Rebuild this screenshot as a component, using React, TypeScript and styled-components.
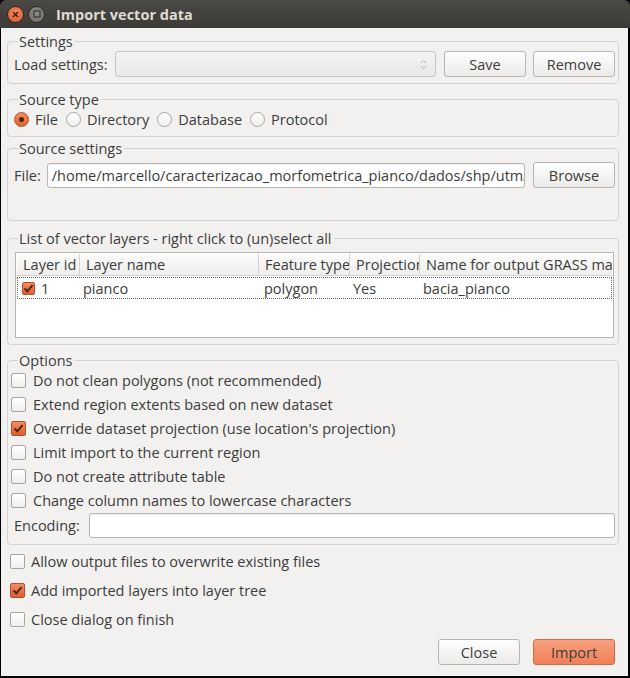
import React from "react";
import styled, { createGlobalStyle, css } from "styled-components";

const Global = createGlobalStyle`
  html, body { margin: 0; padding: 0; background: #000; }
  body { width: 630px; height: 678px; overflow: hidden; }
  * { box-sizing: border-box; }
`;

const FONT = `"Open Sans", "Noto Sans", sans-serif`;

const Window = styled.div`
  width: 630px;
  height: 678px;
  display: flex;
  flex-direction: column;
  background: #000;
  font-family: ${FONT};
  font-size: 14.5px;
  color: #3c3c3c;
`;

const TitleBar = styled.div`
  height: 28px;
  flex: none;
  display: flex;
  align-items: center;
  padding-left: 7px;
  gap: 4px;
  background: linear-gradient(#4a4944, #3c3b37);
  border-radius: 6px 6px 0 0;
`;

const WinBtn = styled.div<{ $close?: boolean }>`
  width: 17px;
  height: 17px;
  border-radius: 50%;
  display: flex;
  align-items: center;
  justify-content: center;
  ${(p) =>
    p.$close
      ? css`
          background: radial-gradient(circle at 50% 35%, #f58a5e, #e0532b);
          border: 1px solid #2a2926;
        `
      : css`
          background: radial-gradient(circle at 50% 35%, #8f8d87, #6d6b66);
          border: 1px solid #2a2926;
        `}
`;

const Title = styled.div`
  margin-left: 7px;
  font-weight: bold;
  font-size: 14.5px;
  color: #dfdbd2;
`;

const Body = styled.div`
  flex: 1;
  margin: 0 2px 2px 1px;
  background: #f2f1f0;
  display: flex;
  flex-direction: column;
  padding: 5px 9px 11px 6px;
`;

const Group = styled.fieldset<{ $mt?: number; $pt?: number; $pb?: number; $pl?: number }>`
  margin: ${(p) => p.$mt ?? 0}px 0 0 0;
  border: 1px solid #d6d3ce;
  border-radius: 4px;
  padding: ${(p) => p.$pt ?? 1}px 3px ${(p) => p.$pb ?? 6}px ${(p) => p.$pl ?? 6}px;
  min-width: 0;
`;

const Legend = styled.legend`
  padding: 0 2px 0 1px;
  margin-left: 4px;
  line-height: 17px;
  font-size: 14.5px;
  color: #3c3c3c;
`;

const Row = styled.div<{ $gap?: number; $h?: number }>`
  display: flex;
  align-items: center;
  gap: ${(p) => p.$gap ?? 6}px;
  height: ${(p) => p.$h ?? 26}px;
`;

const Label = styled.span`
  flex: none;
  white-space: nowrap;
`;

const Combo = styled.div`
  flex: 1;
  height: 26px;
  border: 1px solid #c9c6c1;
  border-radius: 3px;
  background: linear-gradient(#f5f4f3, #e9e8e6);
  display: flex;
  align-items: center;
  justify-content: flex-end;
  padding-right: 8px;
  margin-right: 1px;
`;

const Button = styled.div<{ $primary?: boolean; $ml?: number }>`
  flex: none;
  width: 82px;
  height: 26px;
  margin-left: ${(p) => p.$ml ?? 0}px;
  border-radius: 3px;
  display: flex;
  align-items: center;
  justify-content: center;
  color: #3c3c3c;
  ${(p) =>
    p.$primary
      ? css`
          background: linear-gradient(#f7a07e, #ef8058);
          border: 1px solid #d36b48;
        `
      : css`
          background: linear-gradient(#ffffff, #ebeae8);
          border: 1px solid #b8b5b0;
        `}
`;

const TextInput = styled.div`
  flex: 1;
  min-width: 0;
  height: 25px;
  border: 1px solid #b8b5b0;
  border-radius: 3px;
  background: #fff;
  display: flex;
  align-items: center;
  padding-left: 4px;
  overflow: hidden;
  box-shadow: inset 0 1px 1px rgba(0, 0, 0, 0.06);
`;

const InputText = styled.span`
  display: block;
  width: 100%;
  overflow: hidden;
  white-space: nowrap;
  text-overflow: clip;
`;

const RadioItem = styled.label`
  display: flex;
  align-items: center;
  gap: 6px;
  margin-right: 8px;
`;

const RadioDot = styled.span<{ $on?: boolean }>`
  width: 15px;
  height: 15px;
  border-radius: 50%;
  display: inline-flex;
  align-items: center;
  justify-content: center;
  ${(p) =>
    p.$on
      ? css`
          background: linear-gradient(#f38c62, #e5602f);
          border: 1px solid #b8502e;
          &::after {
            content: "";
            width: 5px;
            height: 5px;
            border-radius: 50%;
            background: #4b2618;
          }
        `
      : css`
          background: linear-gradient(#ffffff, #efeeec);
          border: 1px solid #a8a5a0;
        `}
`;

const CheckBox = styled.span<{ $on?: boolean; $size?: number }>`
  flex: none;
  width: ${(p) => p.$size ?? 15}px;
  height: ${(p) => p.$size ?? 15}px;
  border-radius: 2px;
  display: inline-flex;
  align-items: center;
  justify-content: center;
  ${(p) =>
    p.$on
      ? css`
          background: linear-gradient(#f38c62, #e25c2c);
          border: 1px solid #b24e2c;
        `
      : css`
          background: linear-gradient(#ffffff, #f0efed);
          border: 1px solid #a8a5a0;
        `}
`;

const Check = ({ on, size }: { on?: boolean; size?: number }) => (
  <CheckBox $on={on} $size={size}>
    {on && (
      <svg width="11" height="11" viewBox="0 0 11 11">
        <path d="M1.5 5.5 L4.3 8.3 L9.6 2.2" fill="none" stroke="#4a2518" strokeWidth="2" />
      </svg>
    )}
  </CheckBox>
);

const CheckRow = styled.label<{ $h: number; $gap: number }>`
  display: flex;
  align-items: center;
  gap: ${(p) => p.$gap}px;
  height: ${(p) => p.$h}px;
  white-space: nowrap;
`;

const Table = styled.div`
  height: 86px;
  margin: 0 1px;
  background: #fff;
  border: 1px solid #b8b5b0;
  padding: 1px;
  overflow: hidden;
`;

const COLS = "63px 179px 91px 70px 1fr";

const HeaderRow = styled.div`
  display: grid;
  grid-template-columns: ${COLS};
  height: 22px;
  background: linear-gradient(#fbfbfa, #efeeec);
  border-bottom: 1px solid #d6d3ce;
`;

const HeadCell = styled.div<{ $last?: boolean }>`
  display: flex;
  align-items: center;
  padding-left: 6px;
  white-space: nowrap;
  overflow: hidden;
  border-right: ${(p) => (p.$last ? "none" : "1px solid #d6d3ce")};
`;

const DataRow = styled.div`
  display: grid;
  grid-template-columns: ${COLS};
  height: 22px;
  margin-top: 1px;
  border: 1px dotted #6a6a6a;
`;

const Cell = styled.div<{ $pl?: number }>`
  display: flex;
  align-items: center;
  gap: 6px;
  padding-left: ${(p) => p.$pl ?? 2}px;
  white-space: nowrap;
  overflow: hidden;
`;

const OptionsList = styled.div`
  display: flex;
  flex-direction: column;
  margin: -1px 0 0 -3px;
`;

const Bottom = styled.div`
  display: flex;
  flex-direction: column;
  margin-top: 2px;
  padding-left: 3px;
`;

const ButtonBar = styled.div`
  display: flex;
  justify-content: flex-end;
  gap: 13px;
  margin-top: 5px;
  padding-right: 4px;
`;

const Spin = () => (
  <svg width="7" height="11" viewBox="0 0 7 11">
    <path d="M1 4 L3.5 1.5 L6 4" fill="none" stroke="#b3b0ab" strokeWidth="1" />
    <path d="M1 7 L3.5 9.5 L6 7" fill="none" stroke="#b3b0ab" strokeWidth="1" />
  </svg>
);

const options: [string, boolean][] = [
  ["Do not clean polygons (not recommended)", false],
  ["Extend region extents based on new dataset", false],
  ["Override dataset projection (use location's projection)", true],
  ["Limit import to the current region", false],
  ["Do not create attribute table", false],
  ["Change column names to lowercase characters", false],
];

const bottomOpts: [string, boolean][] = [
  ["Allow output files to overwrite existing files", false],
  ["Add imported layers into layer tree", true],
  ["Close dialog on finish", false],
];

export default function App() {
  return (
    <Window>
      <Global />
      <TitleBar>
        <WinBtn $close>
          <svg width="7" height="7" viewBox="0 0 7 7">
            <path d="M1 1 L6 6 M6 1 L1 6" stroke="#3a1a10" strokeWidth="1.4" />
          </svg>
        </WinBtn>
        <WinBtn>
          <svg width="8" height="8" viewBox="0 0 8 8">
            <rect x="1" y="1" width="6" height="6" fill="none" stroke="#3c3b37" strokeWidth="1.3" />
          </svg>
        </WinBtn>
        <Title>Import vector data</Title>
      </TitleBar>
      <Body>
        <Group $pt={1} $pb={6}>
          <Legend>Settings</Legend>
          <Row $gap={7}>
            <Label>Load settings:</Label>
            <Combo>
              <Spin />
            </Combo>
            <Button>Save</Button>
            <Button>Remove</Button>
          </Row>
        </Group>

        <Group $mt={7} $pt={1} $pb={7}>
          <Legend>Source type</Legend>
          <Row $h={20} $gap={0}>
            <RadioItem>
              <RadioDot $on />
              File
            </RadioItem>
            <RadioItem>
              <RadioDot />
              Directory
            </RadioItem>
            <RadioItem>
              <RadioDot />
              Database
            </RadioItem>
            <RadioItem>
              <RadioDot />
              Protocol
            </RadioItem>
          </Row>
        </Group>

        <Group $mt={3} $pt={5} $pb={32}>
          <Legend>Source settings</Legend>
          <Row $gap={6}>
            <Label>File:</Label>
            <TextInput>
              <InputText>/home/marcello/caracterizacao_morfometrica_pianco/dados/shp/utm/bacia_pianco.shp</InputText>
            </TextInput>
            <Button $ml={2}>Browse</Button>
          </Row>
        </Group>

        <Group $mt={9} $pt={5} $pb={6}>
          <Legend>List of vector layers - right click to (un)select all</Legend>
          <Table>
            <HeaderRow>
              <HeadCell>Layer id</HeadCell>
              <HeadCell>Layer name</HeadCell>
              <HeadCell>Feature type</HeadCell>
              <HeadCell>Projection</HeadCell>
              <HeadCell $last>Name for output GRASS map</HeadCell>
            </HeaderRow>
            <DataRow>
              <Cell $pl={4}>
                <Check on size={13} />1
              </Cell>
              <Cell>pianco</Cell>
              <Cell $pl={4}>polygon</Cell>
              <Cell $pl={2}>Yes</Cell>
              <Cell $pl={2}>bacia_pianco</Cell>
            </DataRow>
          </Table>
        </Group>

        <Group $mt={7} $pt={0} $pb={6}>
          <Legend>Options</Legend>
          <OptionsList>
            {options.map(([t, on]) => (
              <CheckRow key={t} $h={24} $gap={7}>
                <Check on={on} />
                {t}
              </CheckRow>
            ))}
          </OptionsList>
          <Row $gap={9}>
            <Label>Encoding:</Label>
            <TextInput />
          </Row>
        </Group>

        <Bottom>
          {bottomOpts.map(([t, on]) => (
            <CheckRow key={t} $h={29} $gap={6}>
              <Check on={on} />
              {t}
            </CheckRow>
          ))}
        </Bottom>

        <ButtonBar>
          <Button>Close</Button>
          <Button $primary>Import</Button>
        </ButtonBar>
      </Body>
    </Window>
  );
}
